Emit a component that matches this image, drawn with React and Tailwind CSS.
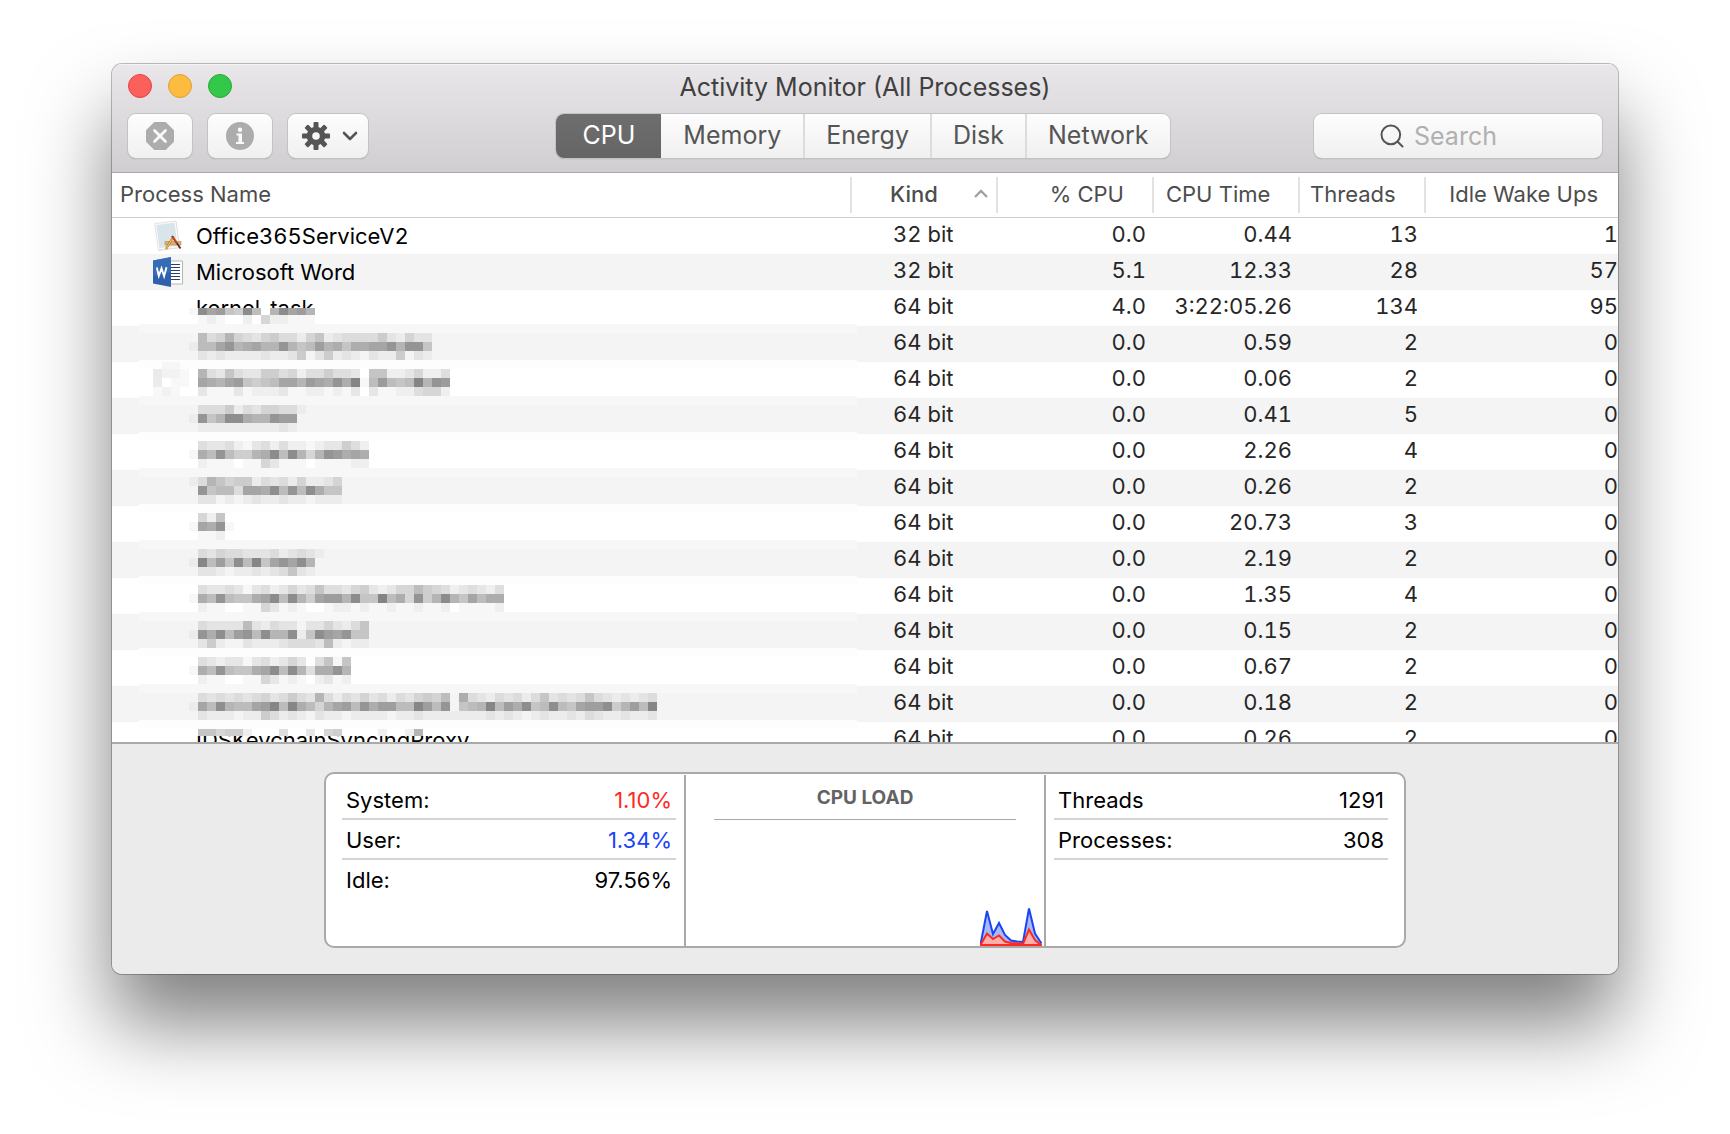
import { Search } from "lucide-react";

const TABS = ["CPU", "Memory", "Energy", "Disk", "Network"];

// Redacted names are mosaics: one hex digit per 9px tile, 0 = clear, f = darkest
const PROCESSES = [
  { name: "Office365ServiceV2", icon: "app", kind: "32 bit", cpu: "0.0", time: "0.44", threads: 13, wakeups: 1 },
  { name: "Microsoft Word", icon: "word", kind: "32 bit", cpu: "5.1", time: "12.33", threads: 28, wakeups: 57 },
  {
    name: "kernel_task",
    kind: "64 bit", cpu: "4.0", time: "3:22:05.26", threads: 134, wakeups: 95,
    tiles: ["", "1ebc76e809ebc9", "01210020522111"],
    coverFrom: 18,
    coverTo: 36,
  },
  {
    kind: "64 bit", cpu: "0.0", time: "0.59", threads: 2, wakeups: 0,
    tiles: ["073484324533146123333521422", "177ac89a88c867b89699aac8cc6", "021211112112502512102115021"],
  },
  {
    kind: "64 bit", cpu: "0.0", time: "0.06", threads: 2, wakeups: 0,
    tiles: ["09437433664524464430772235224", "0ba9bc7678bb9cbadaf18c878f9dc", "03111312223112212130311224552"],
    iconTiles: ["0110", "3221", "3011", "1210"],
  },
  {
    kind: "64 bit", cpu: "0.0", time: "0.41", threads: 5, wakeups: 0,
    tiles: ["0333513244331", "1c68dd988cbb0", "0111111111210"],
  },
  {
    kind: "64 bit", cpu: "0.0", time: "2.26", threads: 4, wakeups: 0,
    tiles: ["04334213424221233642", "1a8d8669ae8e959dcaba", "02111011531110111122"],
  },
  {
    kind: "64 bit", cpu: "0.0", time: "0.26", threads: 2, wakeups: 0,
    tiles: ["13864551323141124", "0c6773aa9d7c7d966", "02201012112110111"],
  },
  {
    kind: "64 bit", cpu: "0.0", time: "20.73", threads: 3, wakeups: 0,
    tiles: ["05270", "1bad1", "01120"],
  },
  {
    kind: "64 bit", cpu: "0.0", time: "2.19", threads: 2, wakeups: 0,
    tiles: ["032433222312321", "1e7b6d7e6acad80", "022101121236210"],
  },
  {
    kind: "64 bit", cpu: "0.0", time: "1.35", threads: 4, wakeups: 0,
    tiles: ["04334313423534744356323558654234324", "1a8d877abe8e96bcc9e77f8a5d69e97b8aa", "02110011531210012212112112112011112"],
  },
  {
    kind: "64 bit", cpu: "0.0", time: "0.15", threads: 2, wakeups: 0,
    tiles: ["03222272132202242136", "1c9d7bc7d88d16dbac66", "02510021112333271011"],
  },
  {
    kind: "64 bit", cpu: "0.0", time: "0.67", threads: 2, wakeups: 0,
    tiles: ["043233134235304717", "1a8d877abe8e94aad9", "021100115312102312"],
  },
  {
    kind: "64 bit", cpu: "0.0", time: "0.18", threads: 2, wakeups: 0,
    tiles: [
      "0323232342353283132423132454709321323136232363212123",
      "1a7d877abe7e9748ab7c9bb77eb7c0678e7b9d67d76abbd58b7e",
      "0211101153121021101111011211111112121012112132112112",
    ],
  },
  {
    name: "IDSKeychainSyncingProxy",
    kind: "64 bit", cpu: "0.0", time: "0.26", threads: 2, wakeups: 0,
    tiles: ["07756620004003056000020029", "", ""],
    coverFrom: 0,
    coverTo: 14,
  },
];

function Mosaic({ row, striped }) {
  const from = row.coverFrom ?? 0;
  const to = row.coverTo ?? 36;
  const ground = striped ? "#f4f4f4" : "#ffffff";
  const band = striped ? "#f7f7f7" : "#fdfdfd";
  const nextBand = striped ? "#fdfdfd" : "#f7f7f7";

  return (
    <svg
      className="absolute left-[27px] top-0 h-9 w-[718px]"
      viewBox="0 0 718 36"
      shapeRendering="crispEdges"
      aria-hidden="true"
    >
      <rect x="0" y={from} width="718" height={to - from} fill={ground} />
      {from === 0 && <rect x="0" y="0" width="718" height="7" fill={band} />}
      {to === 36 && <rect x="0" y="34" width="718" height="2" fill={nextBand} />}
      {row.tiles.map((line, r) =>
        [...line].map((level, c) => {
          const top = Math.max(7 + r * 9, from);
          const bottom = Math.min(16 + r * 9, to);
          return (
            <rect
              key={`${r}-${c}`}
              x={50 + c * 9}
              y={top}
              width="9"
              height={bottom - top}
              fillOpacity={parseInt(level, 16) / 31}
            />
          );
        })
      )}
      {row.iconTiles?.map((line, r) =>
        [...line].map((level, c) => (
          <rect
            key={`icon-${r}-${c}`}
            x={14 + c * 9}
            y={r * 9 - 2}
            width="9"
            height="9"
            fillOpacity={parseInt(level, 16) / 38}
          />
        ))
      )}
    </svg>
  );
}

function AppIcon() {
  return (
    <svg className="size-8" viewBox="0 0 32 32" aria-hidden="true">
      <path d="M3 4.500 24.500 1.500 28 28 7 31Z" fill="#c9c9c9" opacity=".5" />
      <path d="M2.500 3.500 24 1 27.500 27.500 6.500 30Z" fill="#fafafa" stroke="#d8d8d8" strokeWidth=".7" />
      <path d="M4.300 5 22.500 2.800 25.500 25.800 7.500 28Z" fill="#d9e5ea" />
      <path d="M13 21.500h16v3.500H13z" fill="#d9ae78" stroke="#b98a52" strokeWidth=".6" />
      <path d="m21.500 16.500-7.500 12.500" stroke="#8a5a1c" strokeWidth="2.200" />
      <path d="m21.300 17-7.300 12" stroke="#f2b63c" strokeWidth="1.500" />
      <path d="m20 16 8.500 12.500" stroke="#5a2a20" strokeWidth="1.800" />
      <path d="m20.500 16.500 4.500 6.700" stroke="#d8402c" strokeWidth="1.400" />
    </svg>
  );
}

function WordIcon() {
  return (
    <svg className="size-8" viewBox="0 0 32 32" aria-hidden="true">
      <path d="M18 5h12.500v23H18z" fill="#fff" stroke="#b5b5b5" strokeWidth="1" />
      <path d="M19 8.500h9M19 11.500h9M19 14.500h9M19 17.500h9M19 20.500h9M19 23.500h9" stroke="#2b3f66" strokeWidth="1" />
      <path d="M1 4.500 19 1v30L1 27.500Z" fill="#2f61ab" />
      <path d="M1 4.500 19 1v15L1 20Z" fill="#3c71bd" opacity=".6" />
      <path d="m4.800 11.500 2 8.500 2.700-7.500 2.600 7.800 2.400-9" fill="none" stroke="#fff" strokeWidth="1.900" />
    </svg>
  );
}

function StopIcon() {
  return (
    <svg className="size-7" viewBox="0 0 28 28" aria-hidden="true">
      <path d="M8.300 0h11.400L28 8.300v11.400L19.700 28H8.300L0 19.700V8.300Z" fill="#acacac" />
      <path d="m8.500 8.500 11 11m0-11-11 11" stroke="#fafafa" strokeWidth="2.800" strokeLinecap="round" />
    </svg>
  );
}

function InfoIcon() {
  return (
    <svg className="size-7" viewBox="0 0 28 28" aria-hidden="true">
      <circle cx="14" cy="14" r="14" fill="#acacac" />
      <circle cx="14" cy="7.800" r="2.200" fill="#fafafa" />
      <path d="M10.500 11.500h5.500v8.500h2v2h-8v-2h2.500v-6.500h-2Z" fill="#fafafa" />
    </svg>
  );
}

function GearIcon() {
  return (
    <svg className="size-7" viewBox="0 0 28 28" fill="#555" aria-hidden="true">
      {[0, 45, 90, 135].map((angle) => (
        <rect key={angle} x="11.500" y="0" width="5" height="28" rx="1" transform={`rotate(${angle} 14 14)`} />
      ))}
      <circle cx="14" cy="14" r="9.300" />
      <circle cx="14" cy="14" r="3.800" fill="#f8f8f8" />
    </svg>
  );
}

const CONTROL =
  "flex h-11 items-center justify-center rounded-lg bg-linear-to-b from-[#fdfdfd] to-[#f0f0f0] shadow-[0_0_0_1px_#c4c2c4,0_1px_1px_#8f8d8f]";

function Toolbar() {
  return (
    <header className="shrink-0 border-b border-[#a9a7a9] bg-linear-to-b from-[#e9e7ea] to-[#d1ced2] px-4 pt-[10px] pb-[14px] shadow-[inset_0_1px_0_#f5f4f5]">
      <div className="grid grid-cols-[1fr_auto_1fr] items-center">
        <div className="flex gap-4">
          <button aria-label="Close" className="size-6 rounded-full border border-[#e0443e] bg-[#fc605c]" />
          <button aria-label="Minimize" className="size-6 rounded-full border border-[#dea033] bg-[#fdbc40]" />
          <button aria-label="Zoom" className="size-6 rounded-full border border-[#27aa35] bg-[#34c84a]" />
        </div>
        <h1 className="pt-[2px] text-[25px] leading-[22px] text-[#404040]">Activity Monitor (All Processes)</h1>
      </div>

      <div className="mt-4 grid grid-cols-[1fr_auto_1fr] items-center">
        <div className="flex gap-4">
          <button aria-label="Stop process" className={`${CONTROL} w-16`}>
            <StopIcon />
          </button>
          <button aria-label="Process information" className={`${CONTROL} w-16`}>
            <InfoIcon />
          </button>
          <button aria-label="Actions" className={`${CONTROL} w-20 gap-3 pl-1`}>
            <GearIcon />
            <svg className="h-3 w-4" viewBox="0 0 16 12" fill="none" aria-hidden="true">
              <path d="m2 3 6 6 6-6" stroke="#555" strokeWidth="2.600" strokeLinecap="round" strokeLinejoin="round" />
            </svg>
          </button>
        </div>

        <nav className={`${CONTROL} mr-1 overflow-hidden text-[25px] text-[#555]`}>
          {TABS.map((tab, i) => (
            <button
              key={tab}
              className={
                i === 0
                  ? "h-11 bg-linear-to-b from-[#6e6e6e] to-[#656565] px-[26px] pb-px text-white"
                  : "h-11 border-l-2 border-[#dcdcdc] px-[21px] pb-px nth-2:border-l-0 nth-2:px-[22px]"
              }
            >
              {tab}
            </button>
          ))}
        </nav>

        <label className={`${CONTROL} w-72 justify-self-end pl-16`}>
          <Search className="size-7 shrink-0 text-[#555]" strokeWidth={1.7} aria-hidden="true" />
          <input
            type="search"
            aria-label="Search"
            placeholder="Search"
            className="ml-2 min-w-0 flex-1 bg-transparent pt-[2px] text-[25px] outline-none placeholder:text-[#b0b0b0]"
          />
        </label>
      </div>
    </header>
  );
}

function HeaderCell({ children, className, last }) {
  return (
    <th scope="col" className="border-b border-[#cfcfcf] p-0 font-normal">
      <div className="flex h-11 items-center">
        <span className={`flex-1 pb-[2px] ${className}`}>{children}</span>
        {!last && <span className="h-9 w-[2px] bg-[#e2e2e2]" />}
      </div>
    </th>
  );
}

function ProcessTable() {
  return (
    <div className="min-h-0 flex-1 overflow-hidden bg-white">
      <table className="w-full table-fixed border-separate border-spacing-0 text-[22px] leading-8">
        <colgroup>
          <col />
          <col className="w-[146px]" />
          <col className="w-[156px]" />
          <col className="w-[146px]" />
          <col className="w-[126px]" />
          <col className="w-[192px]" />
        </colgroup>
        <thead className="text-[#4d4d4d]">
          <tr>
            <HeaderCell className="pl-2 text-left">Process Name</HeaderCell>
            <HeaderCell className="flex items-center justify-between pr-[7px] pl-[38px] font-medium">
              Kind
              <svg className="h-3 w-4" viewBox="0 0 16 12" fill="none" aria-hidden="true">
                <path d="m2 9 6-6 6 6" stroke="#a0a0a0" strokeWidth="2.400" />
              </svg>
            </HeaderCell>
            <HeaderCell className="pr-7 text-right">% CPU</HeaderCell>
            <HeaderCell className="pl-3 text-left">CPU Time</HeaderCell>
            <HeaderCell className="pl-[10px] text-left">Threads</HeaderCell>
            <HeaderCell className="pr-5 text-right" last>
              Idle Wake Ups
            </HeaderCell>
          </tr>
        </thead>
        <tbody className="text-[#262626] tabular-nums">
          {PROCESSES.map((row, i) => (
            <tr key={i} className="even:bg-[#f4f4f4]">
              <td className="relative h-9 p-0 align-top leading-9 text-black">
                <div className="flex h-9 items-center gap-3 pl-10">
                  <span className="size-8 shrink-0">
                    {row.icon === "app" && <AppIcon />}
                    {row.icon === "word" && <WordIcon />}
                  </span>
                  {row.name}
                </div>
                {row.tiles && <Mosaic row={row} striped={i % 2 === 1} />}
              </td>
              <td className="p-0 pl-[41px] align-top">{row.kind}</td>
              <td className="p-0 pr-2 text-right align-top">{row.cpu}</td>
              <td className="p-0 pr-2 text-right align-top">{row.time}</td>
              <td className="p-0 pr-2 text-right align-top">{row.threads}</td>
              <td className="p-0 text-right align-top">{row.wakeups}</td>
            </tr>
          ))}
        </tbody>
      </table>
    </div>
  );
}

function Stat({ label, value, valueClass, last }) {
  return (
    <div className={`flex h-10 items-center justify-between px-1 pt-[2px] ${last ? "pb-[2px]" : "border-b-2 border-[#d4d4d4]"}`}>
      <dt>{label}</dt>
      <dd className={valueClass}>{value}</dd>
    </div>
  );
}

function CpuLoad() {
  return (
    <section className="flex flex-col">
      <h2 className="mx-7 flex h-[46px] items-center justify-center border-b border-[#a9a9a9] pt-1 text-[19px] font-bold text-[#636363]">
        CPU LOAD
      </h2>
      <svg className="mt-auto mr-[2px] h-10 w-[62px] self-end" viewBox="0 0 62 40" aria-hidden="true">
        <path
          d="M.5 38.500 7 5l6 23 6-11 6 12 6 5.500 6 1 6 .5 6-33.500 6 25 6.500 10V40H.5Z"
          fill="#a9b9f7"
        />
        <path
          d="M.5 38.500 7 5l6 23 6-11 6 12 6 5.500 6 1 6 .5 6-33.500 6 25 6.500 10"
          fill="none"
          stroke="#1a45f5"
          strokeWidth="2"
        />
        <path
          d="M.5 39 7 27.500l6 5.500 6-3.500 6 6 6 1.500 12 1 6-14.500L55 34l6 5Z"
          fill="#ffb0ac"
          stroke="#ff2a1f"
          strokeWidth="2"
        />
      </svg>
    </section>
  );
}

function Summary() {
  return (
    <footer className="shrink-0 border-t-2 border-[#a9a9a9] bg-[#ebebeb] px-[212px] pt-7 pb-[26px]">
      <div className="grid h-44 grid-cols-[1fr_2px_1fr_2px_1fr] rounded-[10px] border-2 border-[#a9a9a9] bg-white text-[22px] text-black">
        <dl className="pt-[6px] pr-2 pl-4">
          <Stat label="System:" value="1.10%" valueClass="text-[#ff2a1f]" />
          <Stat label="User:" value="1.34%" valueClass="text-[#1a45f5]" />
          <Stat label="Idle:" value="97.56%" last />
        </dl>
        <div className="mt-px bg-[#a9a9a9]" />
        <CpuLoad />
        <div className="mt-px bg-[#a9a9a9]" />
        <dl className="pt-[6px] pr-4 pl-2">
          <Stat label="Threads" value="1291" />
          <Stat label="Processes:" value="308" />
        </dl>
      </div>
    </footer>
  );
}

export default function App() {
  return (
    <div className="flex h-screen flex-col overflow-hidden bg-white px-28 pt-16 pb-40 font-['Inter','Liberation_Sans',sans-serif]">
      <main className="flex min-h-0 flex-1 flex-col rounded-[10px] shadow-[0_0_0_1px_rgba(0,0,0,0.25),0_50px_80px_rgba(0,0,0,0.5)]">
        <div className="flex min-h-0 flex-1 flex-col overflow-hidden rounded-[10px]">
          <Toolbar />
          <ProcessTable />
          <Summary />
        </div>
      </main>
    </div>
  );
}
